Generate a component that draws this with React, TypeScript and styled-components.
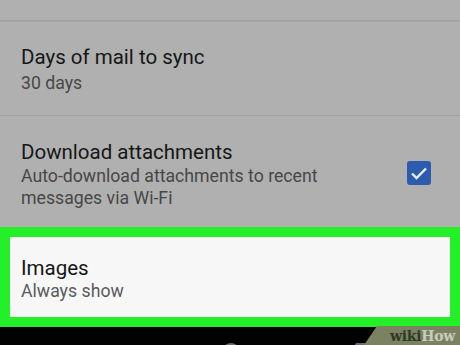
import React from "react";
import styled, { createGlobalStyle } from "styled-components";

const Global = createGlobalStyle`
  html, body { margin: 0; padding: 0; }
  body {
    width: 460px;
    height: 345px;
    overflow: hidden;
    background: #b0b0b0;
    font-family: Roboto, "Noto Sans", Arial, sans-serif;
    -webkit-font-smoothing: antialiased;
  }
`;

const Screen = styled.div`
  width: 460px;
  height: 345px;
  display: flex;
  flex-direction: column;
  background: #b0b0b0;
  position: relative;
  overflow: hidden;
`;

const TopStrip = styled.div`
  height: 20px;
  flex: none;
`;

const Divider = styled.div<{ $h: number }>`
  height: ${(p) => p.$h}px;
  background: #a4a4a4;
  flex: none;
`;

const Row = styled.div<{ $h: number; $pt: number }>`
  height: ${(p) => p.$h}px;
  box-sizing: border-box;
  padding: ${(p) => p.$pt}px 29px 0 21px;
  display: flex;
  align-items: flex-start;
  justify-content: space-between;
  flex: none;
`;

const TextBlock = styled.div`
  display: flex;
  flex-direction: column;
`;

const Title = styled.div<{ $mb?: number }>`
  font-size: 20.5px;
  line-height: 26px;
  color: #161616;
  margin-bottom: ${(p) => (p.$mb ?? 3)}px;
`;

const Sub = styled.div<{ $light?: boolean }>`
  font-size: 17.7px;
  line-height: 21.5px;
  color: ${(p) => (p.$light ? "#5a5a5a" : "#474747")};
  max-width: 320px;
`;

const CheckCell = styled.div`
  margin-top: 22px;
  width: 24px;
  height: 24px;
  border-radius: 3px;
  background: #2d5cae;
  display: flex;
  align-items: center;
  justify-content: center;
`;

const Highlight = styled.div`
  flex: none;
  height: 100px;
  box-sizing: border-box;
  border: 10px solid #24f02a;
  background: #f7f7f7;
  padding: 18px 21px 0 11px;
`;

const NavBar = styled.div`
  flex: 1;
  background: #020202;
  position: relative;
`;

const NavIcon = styled.div<{ $x: number; $round?: boolean }>`
  position: absolute;
  left: ${(p) => p.$x}px;
  top: 16px;
  width: 14px;
  height: 14px;
  border: 2px solid #6a6a6a;
  border-radius: ${(p) => (p.$round ? "50%" : "2px")};
`;

const Watermark = styled.div`
  position: absolute;
  right: 0;
  bottom: 0;
  width: 96px;
  height: 19px;
  background: #7b8262;
  clip-path: polygon(13px 0, 100% 0, 100% 100%, 0 100%);
  display: flex;
  align-items: center;
  justify-content: flex-end;
  padding-right: 5px;
  box-sizing: border-box;
  font-family: "DejaVu Serif", "Liberation Serif", serif;
  font-weight: bold;
  font-size: 14px;
  letter-spacing: -0.3px;
`;

const Wiki = styled.span`
  color: #2e3a22;
`;

const How = styled.span`
  color: #c9cdbd;
`;

export default function App() {
  return (
    <>
      <Global />
      <Screen>
        <TopStrip />
        <Divider $h={2} />
        <Row $h={93} $pt={22}>
          <TextBlock>
            <Title>Days of mail to sync</Title>
            <Sub>30 days</Sub>
          </TextBlock>
        </Row>
        <Divider $h={1} />
        <Row $h={111} $pt={23}>
          <TextBlock>
            <Title $mb={1}>Download attachments</Title>
            <Sub>Auto-download attachments to recent messages via Wi-Fi</Sub>
          </TextBlock>
          <CheckCell>
            <svg width="18" height="14" viewBox="0 0 18 14">
              <path d="M2 7.5 L6.5 12 L16 2.5" fill="none" stroke="#e8edf6" strokeWidth="2.4" />
            </svg>
          </CheckCell>
        </Row>
        <Highlight>
          <TextBlock>
            <Title $mb={0}>Images</Title>
            <Sub $light>Always show</Sub>
          </TextBlock>
        </Highlight>
        <NavBar>
          <NavIcon $x={222} $round />
          <NavIcon $x={355} />
          <Watermark>
            <Wiki>wiki</Wiki>
            <How>How</How>
          </Watermark>
        </NavBar>
      </Screen>
    </>
  );
}
